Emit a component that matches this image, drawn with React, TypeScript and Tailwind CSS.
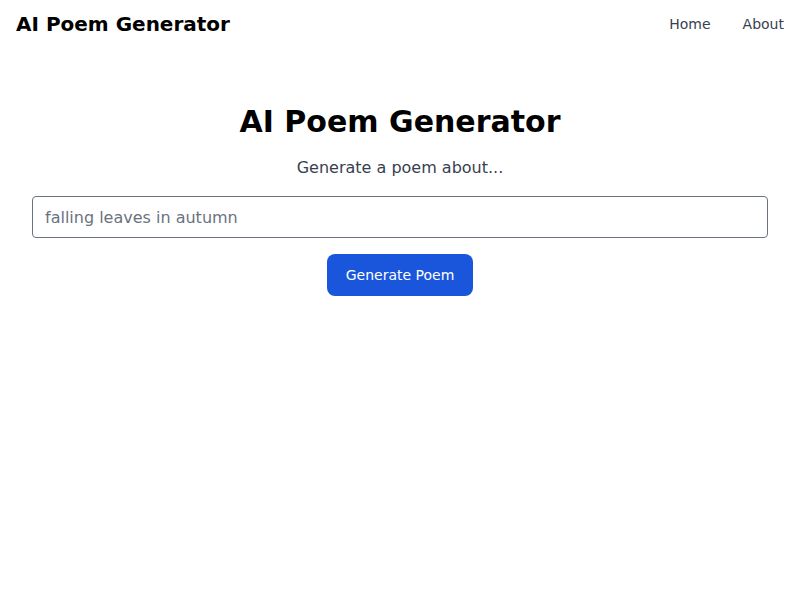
import React, { useState } from "react";

const App = () => {
  const [topic, setTopic] = useState("");

  return (
    <div className="min-h-screen bg-white font-['DejaVu_Sans',sans-serif]">
      {/* Top bar */}
      <header className="flex h-12 items-center justify-between px-4">
        <span className="text-xl font-bold text-black">AI Poem Generator</span>
        <nav className="flex gap-8 text-sm text-[#374151]">
          <a href="#">Home</a>
          <a href="#">About</a>
        </nav>
      </header>

      {/* Generator form */}
      <main className="mx-auto max-w-3xl px-4 pt-14 text-center">
        <h1 className="mb-4 text-3xl font-bold text-black">AI Poem Generator</h1>
        <p className="mb-4 text-base text-[#374151]">Generate a poem about...</p>
        <input
          type="text"
          value={topic}
          onChange={(e) => setTopic(e.target.value)}
          placeholder="falling leaves in autumn"
          className="h-[42px] w-full rounded border border-[#6b7280] px-3 text-base text-gray-900 placeholder:text-[#6b7280] focus:outline-none"
        />
        <div className="mt-4 flex justify-center">
          <button className="h-[42px] rounded-lg bg-[#1a56db] px-[19px] text-sm text-white hover:bg-[#1e429f]">
            Generate Poem
          </button>
        </div>
      </main>
    </div>
  );
};

export default App;
